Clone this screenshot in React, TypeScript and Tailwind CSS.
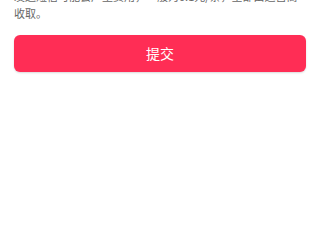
export default function App() {
  return (
    <div
      className="w-[320px] h-[240px] overflow-hidden bg-white px-[14px]"
      style={{ fontFamily: '"Noto Sans CJK SC", "Noto Sans", sans-serif' }}
    >
      <p className="mt-[-12px] text-[11px] leading-[17px] text-[#666666]">
        发送短信可能会产生费用，一般为0.1元/条，全部由运营商收取。
      </p>
      <button className="mt-[13px] w-full h-[37px] rounded-[6px] bg-[#ff2d55] text-white text-[14px] shadow-[0_1px_2px_rgba(0,0,0,0.15)]">
        提交
      </button>
    </div>
  );
}
